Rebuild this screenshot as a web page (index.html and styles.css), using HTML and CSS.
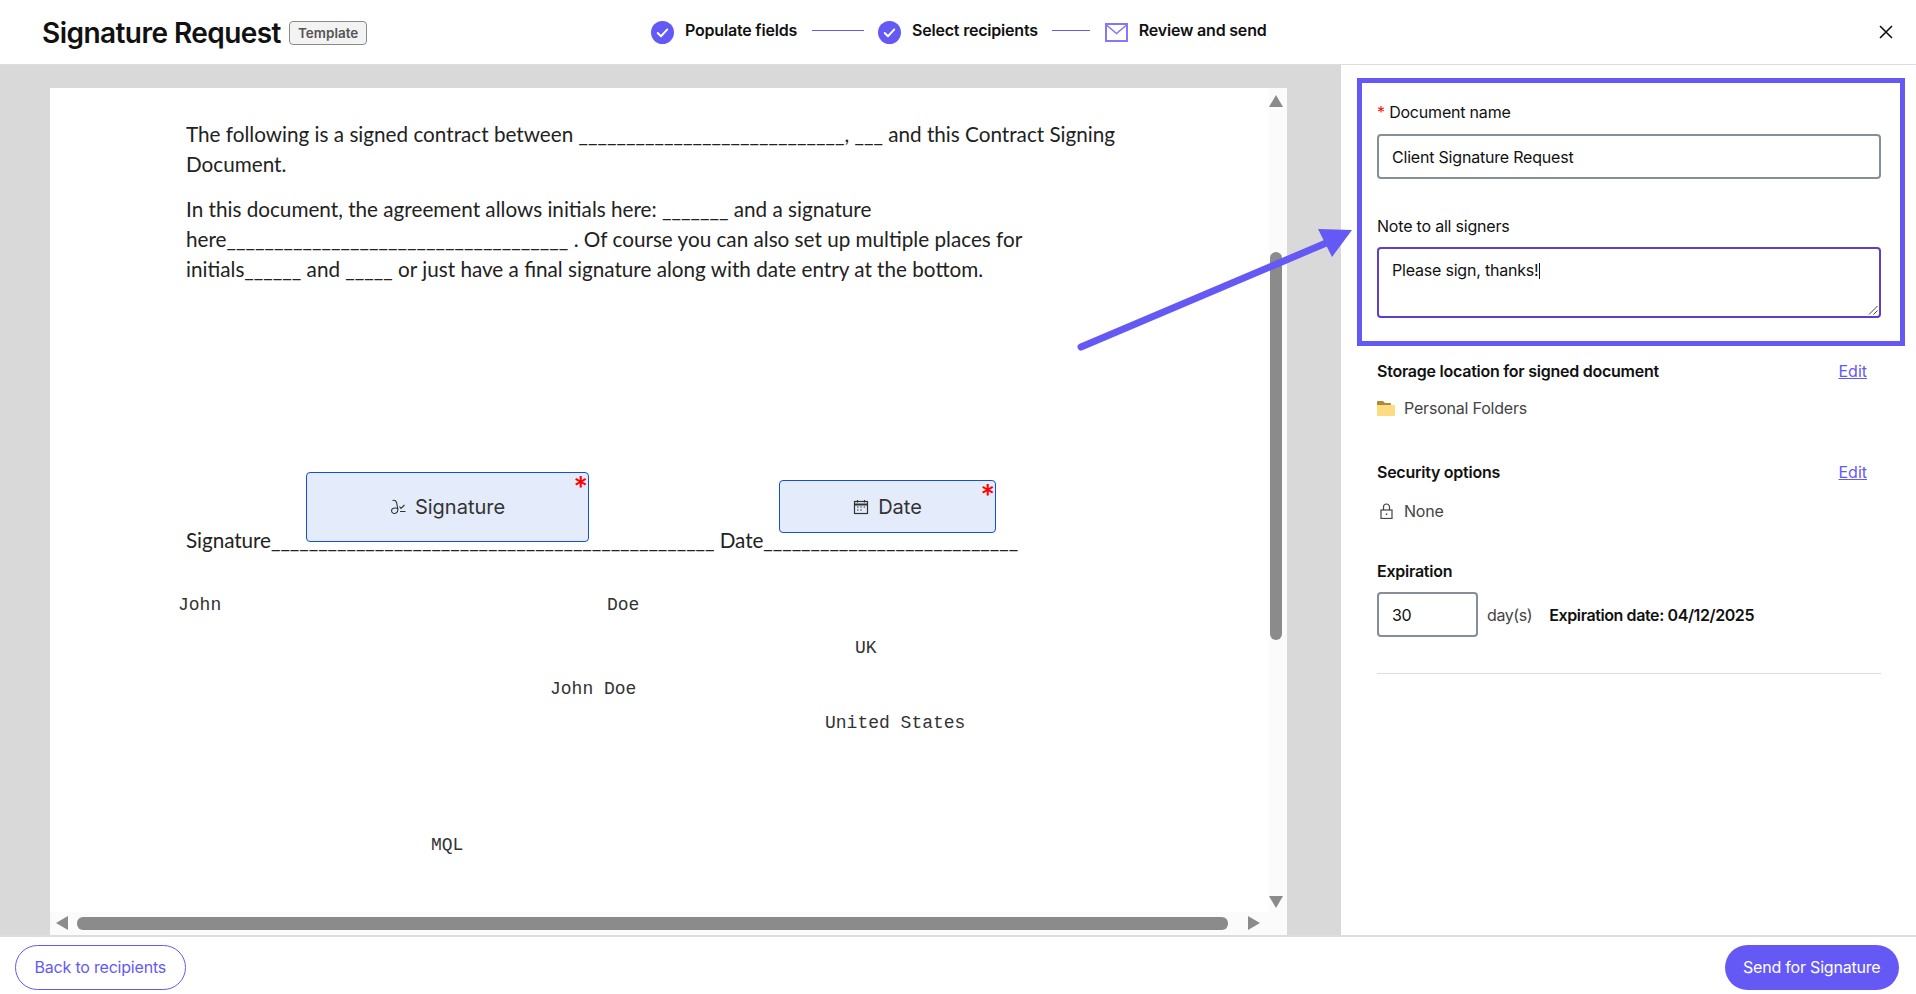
FILE: index.html
```html
<!DOCTYPE html>
<html lang="en">
<head>
  <meta charset="UTF-8" />
  <meta name="viewport" content="width=device-width, initial-scale=1.0" />
  <title>Signature Request</title>
  <link rel="stylesheet" href="styles.css">
</head>
<body>
  <div class="app">
    <header class="topbar">
      <div class="title-group">
        <h1>Signature Request</h1>
        <span class="badge">Template</span>
      </div>

      <ol class="stepper">
        <li class="step">
          <svg class="step-icon" viewBox="0 0 24 24"><circle cx="12" cy="12" r="12" fill="#6559f5"/><path d="M7 12.5l3.4 3.4L17 8.8" fill="none" stroke="#fff" stroke-width="2" stroke-linecap="round" stroke-linejoin="round"/></svg>
          <span>Populate fields</span>
        </li>
        <li class="step-line step-line-long"></li>
        <li class="step">
          <svg class="step-icon" viewBox="0 0 24 24"><circle cx="12" cy="12" r="12" fill="#6559f5"/><path d="M7 12.5l3.4 3.4L17 8.8" fill="none" stroke="#fff" stroke-width="2" stroke-linecap="round" stroke-linejoin="round"/></svg>
          <span>Select recipients</span>
        </li>
        <li class="step-line"></li>
        <li class="step">
          <svg class="step-icon" viewBox="0 0 23 19"><rect x="1" y="1" width="21" height="17" fill="none" stroke="#8379f7" stroke-width="2"/><path d="M1.5 2l10 8.500 10-8.500" fill="none" stroke="#8379f7" stroke-width="1.500"/></svg>
          <span>Review and send</span>
        </li>
      </ol>

      <button class="close-btn" aria-label="Close">
        <svg viewBox="0 0 14 14" width="14" height="14"><path d="M1 1l12 12M13 1L1 13" stroke="#111" stroke-width="1.600" fill="none"/></svg>
      </button>
    </header>

    <div class="workspace">
      <main class="viewer">
        <div class="page">
          <div class="page-text">
            <p>The following is a signed contract between ____________________________, ___ and this Contract Signing<br>Document.</p>
            <p class="para-gap">In this document, the agreement allows initials here: _______ and a signature<br>here____________________________________ . Of course you can also set up multiple places for<br>initials______ and _____ or just have a final signature along with date entry at the bottom.</p>
            <p class="sign-line">Signature_______________________________________________ Date___________________________</p>
          </div>

          <!-- fields and filled values sit on the document canvas -->
          <div class="field field-signature">
            <svg class="field-icon" viewBox="0 0 16 16"><path d="M2.500 1.500C5 .5 6.800 2.500 7 5.500L7.800 10.500C8 13.500 5.500 15 3.300 14.200 .8 13.200 1 10 3.500 9.300 5.300 8.800 7 9 8.500 9.800" fill="none" stroke="#333" stroke-width="1.100"/><path d="M9.500 7.500l1.500 2 3.500-3.500M10 12.500h5.500" fill="none" stroke="#333" stroke-width="1.100"/></svg>
            <span>Signature</span>
            <b class="field-star">*</b>
          </div>
          <div class="field field-date">
            <svg class="field-icon" viewBox="0 0 16 16"><rect x="1.500" y="2.500" width="13" height="12" fill="none" stroke="#333" stroke-width="1.200"/><path d="M1.500 5.500h13" stroke="#333" stroke-width="2"/><path d="M4.500 1v2.500M11.500 1v2.500" stroke="#333" stroke-width="1.200"/><path d="M4 8h1.500M7.300 8h1.500M10.600 8h1.500M4 11h1.500M7.300 11h1.500" stroke="#333" stroke-width="1.200"/></svg>
            <span>Date</span>
            <b class="field-star">*</b>
          </div>

          <span class="mono mono-first">John</span>
          <span class="mono mono-last">Doe</span>
          <span class="mono mono-uk">UK</span>
          <span class="mono mono-full">John Doe</span>
          <span class="mono mono-country">United States</span>
          <span class="mono mono-mql">MQL</span>

          <!-- scrollbars -->
          <div class="scroll-v">
            <i class="arrow arrow-up"></i>
            <i class="thumb-v"></i>
            <i class="arrow arrow-down"></i>
          </div>
          <div class="scroll-h">
            <i class="arrow arrow-left"></i>
            <i class="thumb-h"></i>
            <i class="arrow arrow-right"></i>
          </div>
        </div>
      </main>

      <aside class="panel">
        <section class="highlight">
          <label class="field-label"><span class="req">*</span> Document name</label>
          <div class="text-input">Client Signature Request</div>
          <label class="field-label note-label">Note to all signers</label>
          <div class="text-input note-input">
            Please sign, thanks!<span class="caret"></span>
            <svg class="grip" viewBox="0 0 10 10" width="10" height="10"><path d="M1 9.500L9.500 1M5.500 9.500L9.500 5.500" stroke="#444" stroke-width="1"/></svg>
          </div>
        </section>

        <section class="options">
          <div class="option-head">
            <h2>Storage location for signed document</h2>
            <a href="#" class="edit-link">Edit</a>
          </div>
          <div class="option-value value-storage">
            <svg class="value-icon" viewBox="0 0 18 16"><path d="M0 2a1 1 0 0 1 1-1h5l2 2h5a1 1 0 0 1 1 1v2H0z" fill="#b08a32"/><path d="M0 5h17a1 1 0 0 1 1 1v9a1 1 0 0 1-1 1H1a1 1 0 0 1-1-1z" fill="#fbdc80"/></svg>
            <span>Personal Folders</span>
          </div>

          <div class="option-head head-security">
            <h2>Security options</h2>
            <a href="#" class="edit-link">Edit</a>
          </div>
          <div class="option-value value-security">
            <svg class="value-icon" viewBox="0 0 18 16"><rect x="4" y="7" width="11" height="8.500" fill="none" stroke="#444" stroke-width="1.200"/><path d="M6.500 7V4a3 3 0 0 1 6 0v3" fill="none" stroke="#444" stroke-width="1.200"/><rect x="8.800" y="10.500" width="1.500" height="1.500" fill="#444"/></svg>
            <span>None</span>
          </div>

          <h2 class="head-expiration">Expiration</h2>
          <div class="expiry-row">
            <div class="days-input">30</div>
            <span class="days-unit">day(s)</span>
            <strong>Expiration date: 04/12/2025</strong>
          </div>
          <hr class="divider">
        </section>
      </aside>
    </div>

    <footer class="bottombar">
      <a href="#" class="btn btn-outline">Back to recipients</a>
      <a href="#" class="btn btn-solid">Send for Signature</a>
    </footer>

    <svg class="callout" viewBox="0 0 290 140" width="290" height="140">
      <path d="M5 121L262 12" stroke="#6559f5" stroke-width="7" stroke-linecap="round" fill="none"/>
      <path d="M276 4L242 3 256 31z" fill="#6559f5"/>
    </svg>
  </div>
</body>
</html>
```

FILE: styles.css
```css
/* Reset & Base */
* {
  margin: 0;
  padding: 0;
  box-sizing: border-box;
}

body {
  background-color: #fff;
  color: #111;
  font-family: Inter, 'Liberation Sans', sans-serif;
  overflow: hidden;
}

.app {
  position: relative;
  display: flex;
  flex-direction: column;
  height: 994px;
}

/* Top bar */
.topbar {
  display: flex;
  align-items: center;
  height: 65px;
  padding: 0 23px 0 42px;
  border-bottom: 1px solid #ddd;
}

.title-group {
  display: flex;
  align-items: center;
  gap: 8px;
  width: 609px;
  padding-top: 2px;
}

h1 {
  font-size: 28px;
  font-weight: 600;
  letter-spacing: -0.55px;
}

.badge {
  padding: 3px 8px;
  background-color: #f3f3f3;
  border: 1px solid #8a8a8a;
  border-radius: 4px;
  color: #555;
  font-size: 13.5px;
  font-weight: 600;
}

.stepper {
  display: flex;
  align-items: center;
  list-style: none;
  margin-top: -5px;
}

.step {
  display: flex;
  align-items: center;
  gap: 11px;
  font-size: 16px;
  font-weight: 600;
  letter-spacing: -0.2px;
}

.step-icon {
  width: 23px;
  height: 23px;
  margin-top: 5px;
}

.step-line {
  width: 38px;
  height: 1px;
  margin: 2px 14.5px 0;
  background-color: #6559f5;
}

.step-line-long {
  width: 52px;
}

.close-btn {
  margin-left: auto;
  width: 14px;
  height: 14px;
  background: none;
  border: none;
}

/* Middle */
.workspace {
  display: flex;
  flex: 1;
  min-height: 0;
}

.viewer {
  width: 1341px;
  padding: 23px 54px 0 50px;
  background-color: #d9d9d9;
}

.page {
  position: relative;
  height: 100%;
  background-color: #fff;
  overflow: hidden;
}

.page-text {
  padding: 31px 0 0 136px;
  font-family: Lato, 'Liberation Sans', sans-serif;
  font-size: 20.7px;
  line-height: 30px;
  color: #222;
  white-space: nowrap;
}

.para-gap {
  margin-top: 15px;
}

.sign-line {
  margin-top: 241px;
  letter-spacing: -0.06px;
}

.field {
  position: absolute;
  display: flex;
  align-items: center;
  justify-content: center;
  gap: 9px;
  background-color: #e4ebfa;
  border: 1px solid #0f52d6;
  border-radius: 4px;
  font-size: 20px;
  color: #333;
}

.field-signature {
  left: 256px;
  top: 384px;
  width: 283px;
  height: 70px;
}

.field-date {
  left: 729px;
  top: 392px;
  width: 217px;
  height: 53px;
}

.field-icon {
  width: 16px;
  height: 16px;
}

.field-star {
  position: absolute;
  top: 0;
  right: 0;
  color: #f00;
  font-size: 28px;
  font-weight: 500;
  line-height: 1;
}

.mono {
  position: absolute;
  font-family: 'Liberation Mono', monospace;
  font-size: 18px;
  line-height: 20px;
  color: #333;
  white-space: pre;
}

.mono-first { left: 128px; top: 507px; }
.mono-last { left: 557px; top: 507px; }
.mono-uk { left: 805px; top: 550px; }
.mono-full { left: 500px; top: 591px; }
.mono-country { left: 775px; top: 625px; }
.mono-mql { left: 381px; top: 747px; }

/* Scrollbars */
.scroll-v {
  position: absolute;
  top: 0;
  right: 0;
  bottom: 0;
  width: 18px;
  background-color: #fbfbfb;
}

.scroll-h {
  position: absolute;
  left: 0;
  right: 0;
  bottom: 0;
  height: 23px;
  background-color: #fbfbfb;
}

.thumb-v {
  position: absolute;
  top: 164px;
  left: 1px;
  width: 12px;
  height: 388px;
  background-color: #8b8b8b;
  border-radius: 6px;
}

.thumb-h {
  position: absolute;
  top: 5px;
  left: 27px;
  width: 1151px;
  height: 13px;
  background-color: #8b8b8b;
  border-radius: 6px;
}

.arrow {
  position: absolute;
  width: 0;
  height: 0;
  border-style: solid;
  border-color: transparent;
}

.arrow-up {
  top: 7px;
  left: 0;
  border-width: 0 7px 12px;
  border-bottom-color: #8b8b8b;
}

.arrow-down {
  bottom: 27px;
  left: 0;
  border-width: 12px 7px 0;
  border-top-color: #8b8b8b;
}

.arrow-left {
  top: 4px;
  left: 6px;
  border-width: 7px 12px 7px 0;
  border-right-color: #8b8b8b;
}

.arrow-right {
  top: 4px;
  left: 1198px;
  border-width: 7px 0 7px 12px;
  border-left-color: #8b8b8b;
}

/* Right panel */
.panel {
  flex: 1;
  padding: 13px 11px 0 16px;
}

.highlight {
  height: 268px;
  padding: 19px 19px 0 15px;
  border: 5px solid #6559f5;
}

.field-label {
  display: block;
  font-size: 16px;
  line-height: 20px;
  letter-spacing: -0.2px;
}

.req {
  color: #e11;
}

.text-input {
  height: 45px;
  margin-top: 12px;
  padding: 12px 13px;
  border: 2px solid #868e96;
  border-radius: 4px;
  font-size: 16px;
  line-height: 18px;
  letter-spacing: -0.2px;
}

.note-label {
  margin-top: 37px;
}

.note-input {
  position: relative;
  height: 71px;
  margin-top: 11px;
  border-color: #5f3fc8;
}

.caret {
  display: inline-block;
  width: 1px;
  height: 16px;
  background-color: #111;
  vertical-align: -3px;
}

.grip {
  position: absolute;
  right: 1px;
  bottom: 1px;
}

.options {
  padding: 15px 24px 0 20px;
}

.option-head {
  display: flex;
  justify-content: space-between;
  padding-right: 14px;
}

h2 {
  font-size: 16px;
  font-weight: 600;
  line-height: 20px;
  letter-spacing: -0.25px;
}

.edit-link {
  color: #6559f5;
  font-size: 16px;
  line-height: 20px;
}

.option-value {
  display: flex;
  align-items: center;
  gap: 9px;
  color: #444;
  font-size: 16px;
  line-height: 20px;
  letter-spacing: -0.2px;
}

.value-icon {
  width: 18px;
  height: 16px;
}

.value-storage {
  margin-top: 17px;
}

.head-security {
  margin-top: 44px;
}

.value-security {
  margin-top: 19px;
}

.head-expiration {
  margin-top: 40px;
}

.expiry-row {
  display: flex;
  align-items: center;
  margin-top: 11px;
  font-size: 16px;
  letter-spacing: -0.4px;
}

.days-input {
  width: 101px;
  height: 45px;
  padding: 12px 13px;
  border: 2px solid #868e96;
  border-radius: 4px;
  line-height: 18px;
}

.days-unit {
  margin: 0 17px 0 9px;
  color: #444;
}

.expiry-row strong {
  font-weight: 600;
}

.divider {
  margin-top: 36px;
  border: none;
  border-top: 1px solid #ddd;
}

/* Footer */
.bottombar {
  display: flex;
  justify-content: space-between;
  align-items: center;
  height: 59px;
  padding: 3px 17px 0 15px;
  border-top: 2px solid #ddd;
}

.btn {
  display: inline-flex;
  align-items: center;
  height: 45px;
  padding: 0 18.5px;
  border-radius: 23px;
  font-size: 16px;
  letter-spacing: -0.2px;
  text-decoration: none;
}

.btn-outline {
  border: 1px solid #6559f5;
  color: #6559f5;
}

.btn-solid {
  background-color: #6559f5;
  color: #fff;
}

/* Annotation arrow over the panel edge */
.callout {
  position: absolute;
  left: 1076px;
  top: 226px;
}
```
